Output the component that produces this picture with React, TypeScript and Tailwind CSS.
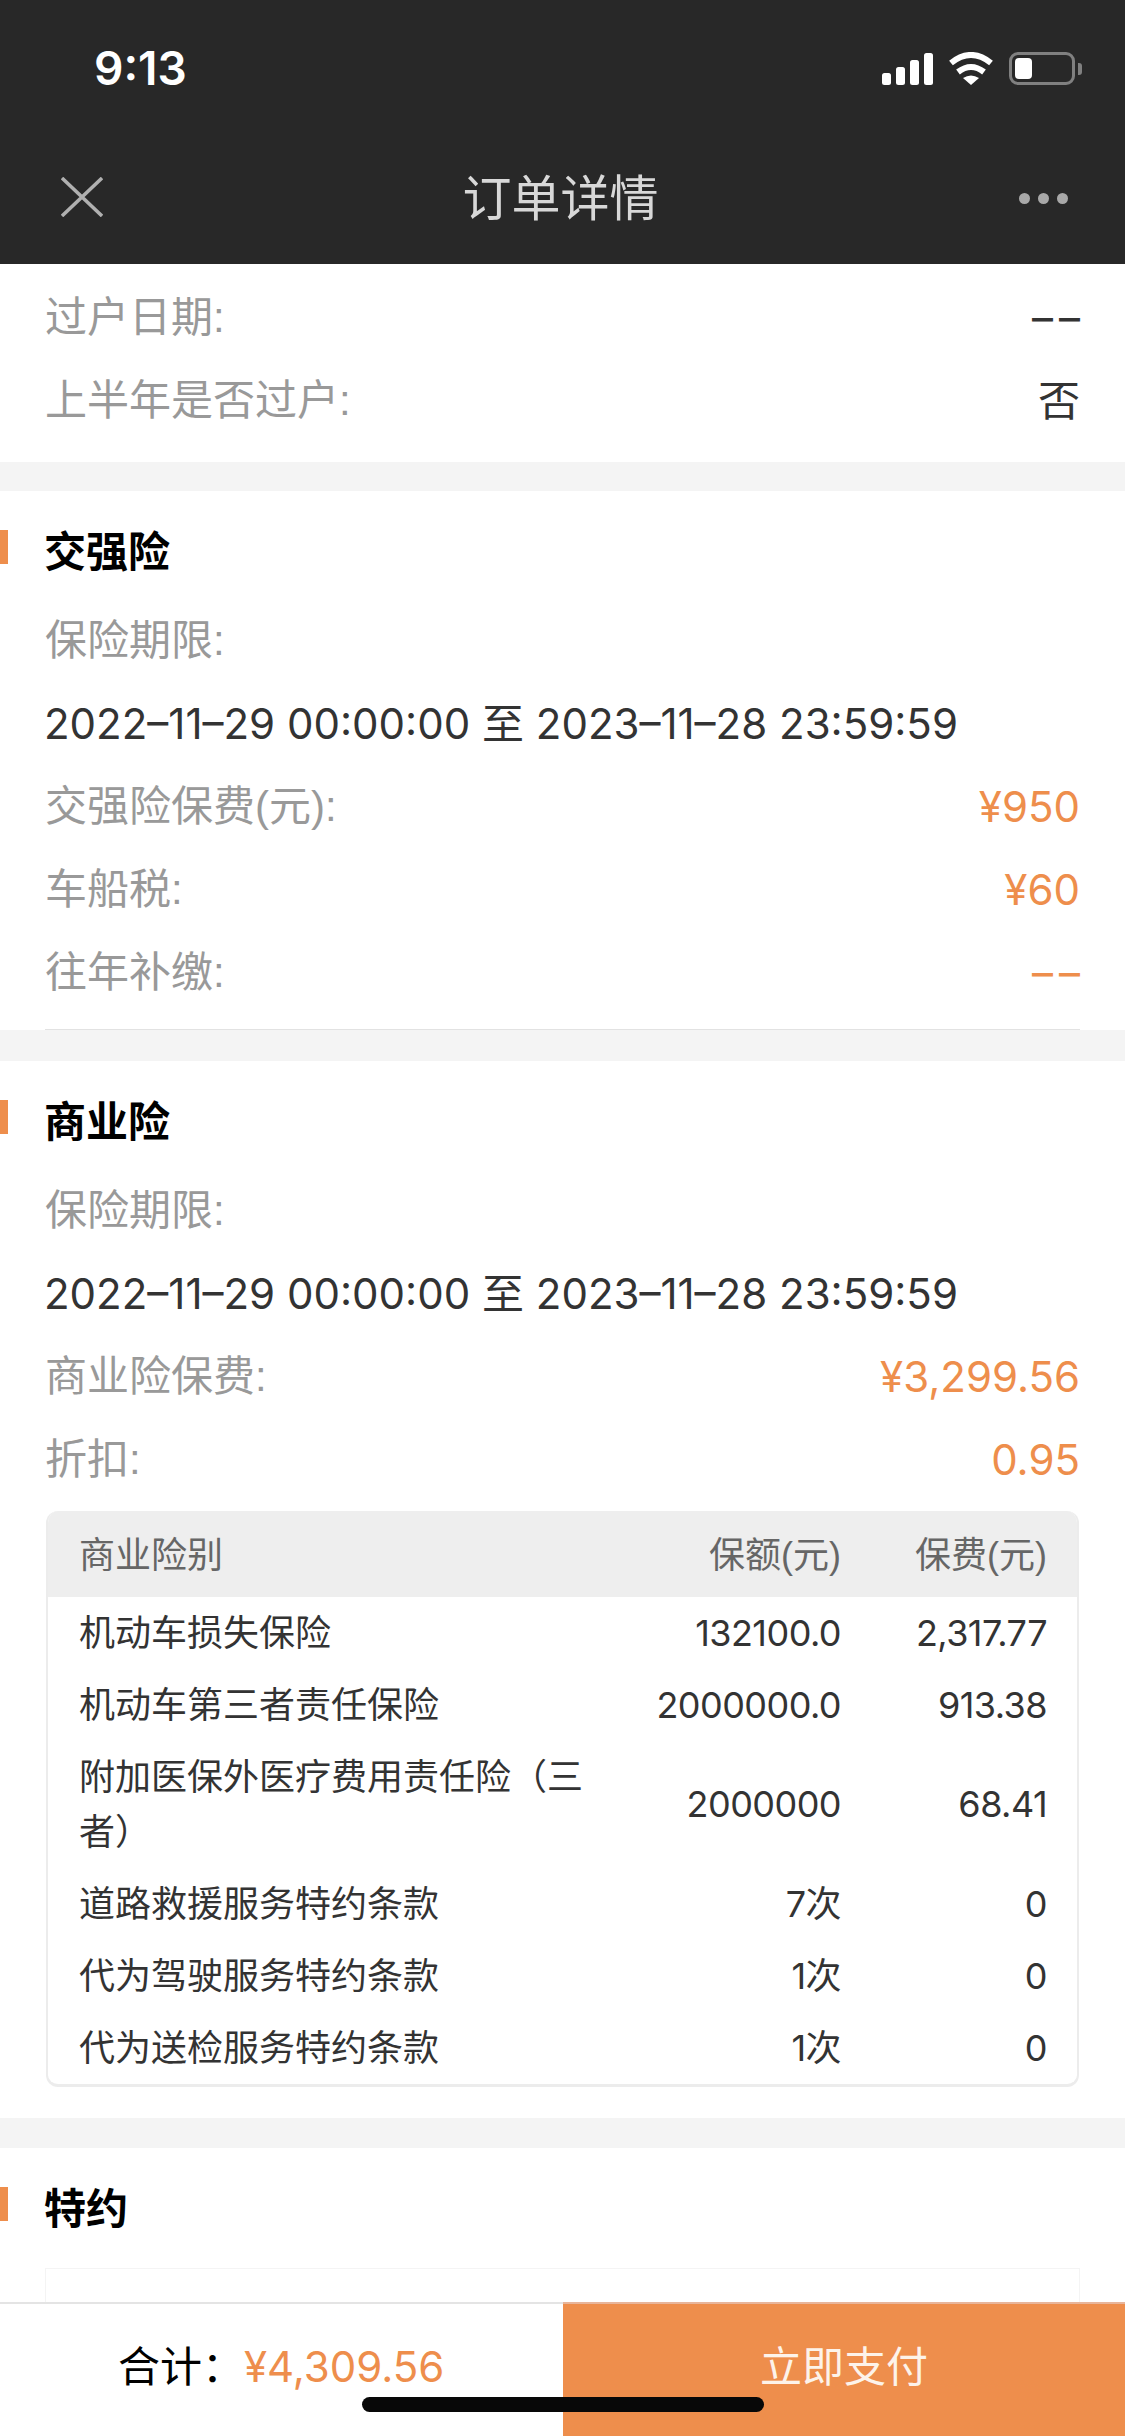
import React from "react";

const LABEL_FONT = "font-['Liberation_Sans','Noto_Sans_CJK_SC',sans-serif]";

const Row = ({ label, value, tone = "text-[#333]" }: { label: string; value: string; tone?: string }) => (
  <div className="h-[83px] flex items-center justify-between pl-[45px] pr-[45px] pb-[4px] text-[42px]">
    <span className={`text-[#999] ${LABEL_FONT}`}>{label}</span>
    <span className={tone}>{value}</span>
  </div>
);

const DateRow = () => (
  <div className="h-[83px] flex items-center pl-[44px] pr-[45px] pb-[4px] text-[42px] text-[#333]">
    2022–11–29 00:00:00 至 2023–11–28 23:59:59
  </div>
);

const SectionTitle = ({ title }: { title: string }) => (
  <div className="relative pt-[39px] pb-[27px] pl-[44px]">
    <div className="absolute left-0 top-[39px] w-[8px] h-[34px] bg-[#ee8e4c]" />
    <h2 className="text-[42px] leading-[44px] font-bold text-black">{title}</h2>
  </div>
);

const coverages = [
  { name: "机动车损失保险", amount: "132100.0", fee: "2,317.77" },
  { name: "机动车第三者责任保险", amount: "2000000.0", fee: "913.38" },
  { name: "附加医保外医疗费用责任险（三者）", amount: "2000000", fee: "68.41" },
  { name: "道路救援服务特约条款", amount: "7次", fee: "0" },
  { name: "代为驾驶服务特约条款", amount: "1次", fee: "0" },
  { name: "代为送检服务特约条款", amount: "1次", fee: "0" },
];

const StatusIcons = () => (
  <div className="flex items-center">
    <div className="flex items-end gap-[4.5px] h-[32px]">
      <div className="w-[9.5px] h-[12px] rounded-[2.5px] bg-white" />
      <div className="w-[9.5px] h-[18px] rounded-[2.5px] bg-white" />
      <div className="w-[9.5px] h-[25px] rounded-[2.5px] bg-white" />
      <div className="w-[9.5px] h-[32px] rounded-[2.5px] bg-white" />
    </div>
    <svg width="46" height="33" viewBox="0 0 46 33" className="ml-[15px]">
      <path d="M3 11 Q23 -5 43 11" fill="none" stroke="#fff" strokeWidth="6" />
      <path d="M10 20 Q23 10 36 20" fill="none" stroke="#fff" strokeWidth="6" />
      <path d="M15 26 Q23 21 31 26 L23 33 Z" fill="#fff" />
    </svg>
    <div className="ml-[15px] w-[66px] h-[33px] rounded-[9px] border-[3px] border-[#808080] p-[3px]">
      <div className="w-[17px] h-full rounded-[4px] bg-white" />
    </div>
    <div className="ml-[3px] w-[4px] h-[12px] rounded-r-[3px] bg-[#808080]" />
  </div>
);

export default function App() {
  return (
    <div className="relative w-[1125px] h-[2436px] overflow-hidden bg-[#f4f4f4] font-['Inter','Noto_Sans_CJK_SC',sans-serif]">
      <header className="h-[264px] bg-[#282828]">
        <div className="h-[138px] flex items-start justify-between pl-[94px] pr-[43px] pt-[52px]">
          <span className="text-[46px] leading-[33px] font-semibold text-white">9:13</span>
          <StatusIcons />
        </div>
        <div className="relative h-[118px] flex items-center justify-center">
          <svg width="42" height="40" viewBox="0 0 42 40" className="absolute left-[61px] top-[39px]">
            <path d="M1 1 L41 39 M41 1 L1 39" stroke="#b0b0b0" strokeWidth="3.5" fill="none" />
          </svg>
          <h1 className="text-[49px] text-[#d8d8d8] font-normal pr-[4px] pt-[3px]">订单详情</h1>
          <div className="absolute left-[1019px] top-[55px] flex gap-[8px]">
            <div className="w-[11px] h-[11px] rounded-full bg-[#a8a8a8]" />
            <div className="w-[11px] h-[11px] rounded-full bg-[#a8a8a8]" />
            <div className="w-[11px] h-[11px] rounded-full bg-[#a8a8a8]" />
          </div>
        </div>
      </header>

      <section className="bg-white pt-[14px] pb-[18px]">
        <Row label="过户日期:" value="––" tone="text-[#333] tracking-[6px] -mr-[6px]" />
        <Row label="上半年是否过户:" value="否" />
      </section>

      <section className="mt-[29px] bg-white">
        <SectionTitle title="交强险" />
        <Row label="保险期限:" value="" />
        <DateRow />
        <Row label="交强险保费(元):" value="¥950" tone="text-[#ee8e4c]" />
        <Row label="车船税:" value="¥60" tone="text-[#ee8e4c]" />
        <Row label="往年补缴:" value="––" tone="text-[#ee8e4c] tracking-[6px] -mr-[6px]" />
        <div className="mx-[45px] mt-[13px] h-px bg-[#e2e2e2]" />
      </section>

      <section className="mt-[31px] bg-white pb-[31px]">
        <SectionTitle title="商业险" />
        <Row label="保险期限:" value="" />
        <DateRow />
        <Row label="商业险保费:" value="¥3,299.56" tone="text-[#ee8e4c]" />
        <Row label="折扣:" value="0.95" tone="text-[#ee8e4c]" />
        <div className="mx-[46px] mt-[8px] rounded-[12px] overflow-hidden border-b-[3px] border-x-2 border-[#ececec] text-[36px]">
          <div className={`h-[86px] flex items-center pl-[31px] pr-[30px] pt-[3px] bg-[#eeeeee] text-[#666] ${LABEL_FONT}`}>
            <div className="w-[520px]">商业险别</div>
            <div className="flex-1 text-right">保额(元)</div>
            <div className="w-[206px] text-right">保费(元)</div>
          </div>
          {coverages.map((item) => (
            <div key={item.name} className="flex items-center pl-[31px] pr-[30px] py-[8.5px] leading-[55px] text-[#333]">
              <div className="w-[520px]">{item.name}</div>
              <div className="flex-1 text-right tracking-[-0.015em]">{item.amount}</div>
              <div className="w-[206px] text-right tracking-[-0.015em]">{item.fee}</div>
            </div>
          ))}
        </div>
      </section>

      <section className="mt-[30px] bg-white h-[400px]">
        <SectionTitle title="特约" />
        <div className="mx-[45px] mt-[10px] h-[200px] border border-[#f4f4f4]" />
      </section>

      <footer className="absolute left-0 right-0 top-[2302px] h-[134px] flex bg-white">
        <div className="w-[563px] border-t-2 border-[#e4e4e4] pl-[118px] pt-[35px] flex items-start text-[42px] leading-[56px]">
          <span className="text-black">合计：</span>
          <span className="text-[#ee8e4c]">¥4,309.56</span>
        </div>
        <button className="flex-1 bg-[#ee8e4c] border-t-2 border-[#e8b59a] text-[42px] leading-[56px] text-[#fdf3ea] pt-[35px] flex justify-center items-start">
          立即支付
        </button>
      </footer>

      <div className="absolute left-[362px] top-[2397px] w-[402px] h-[15px] rounded-full bg-[#080808]" />
    </div>
  );
}
